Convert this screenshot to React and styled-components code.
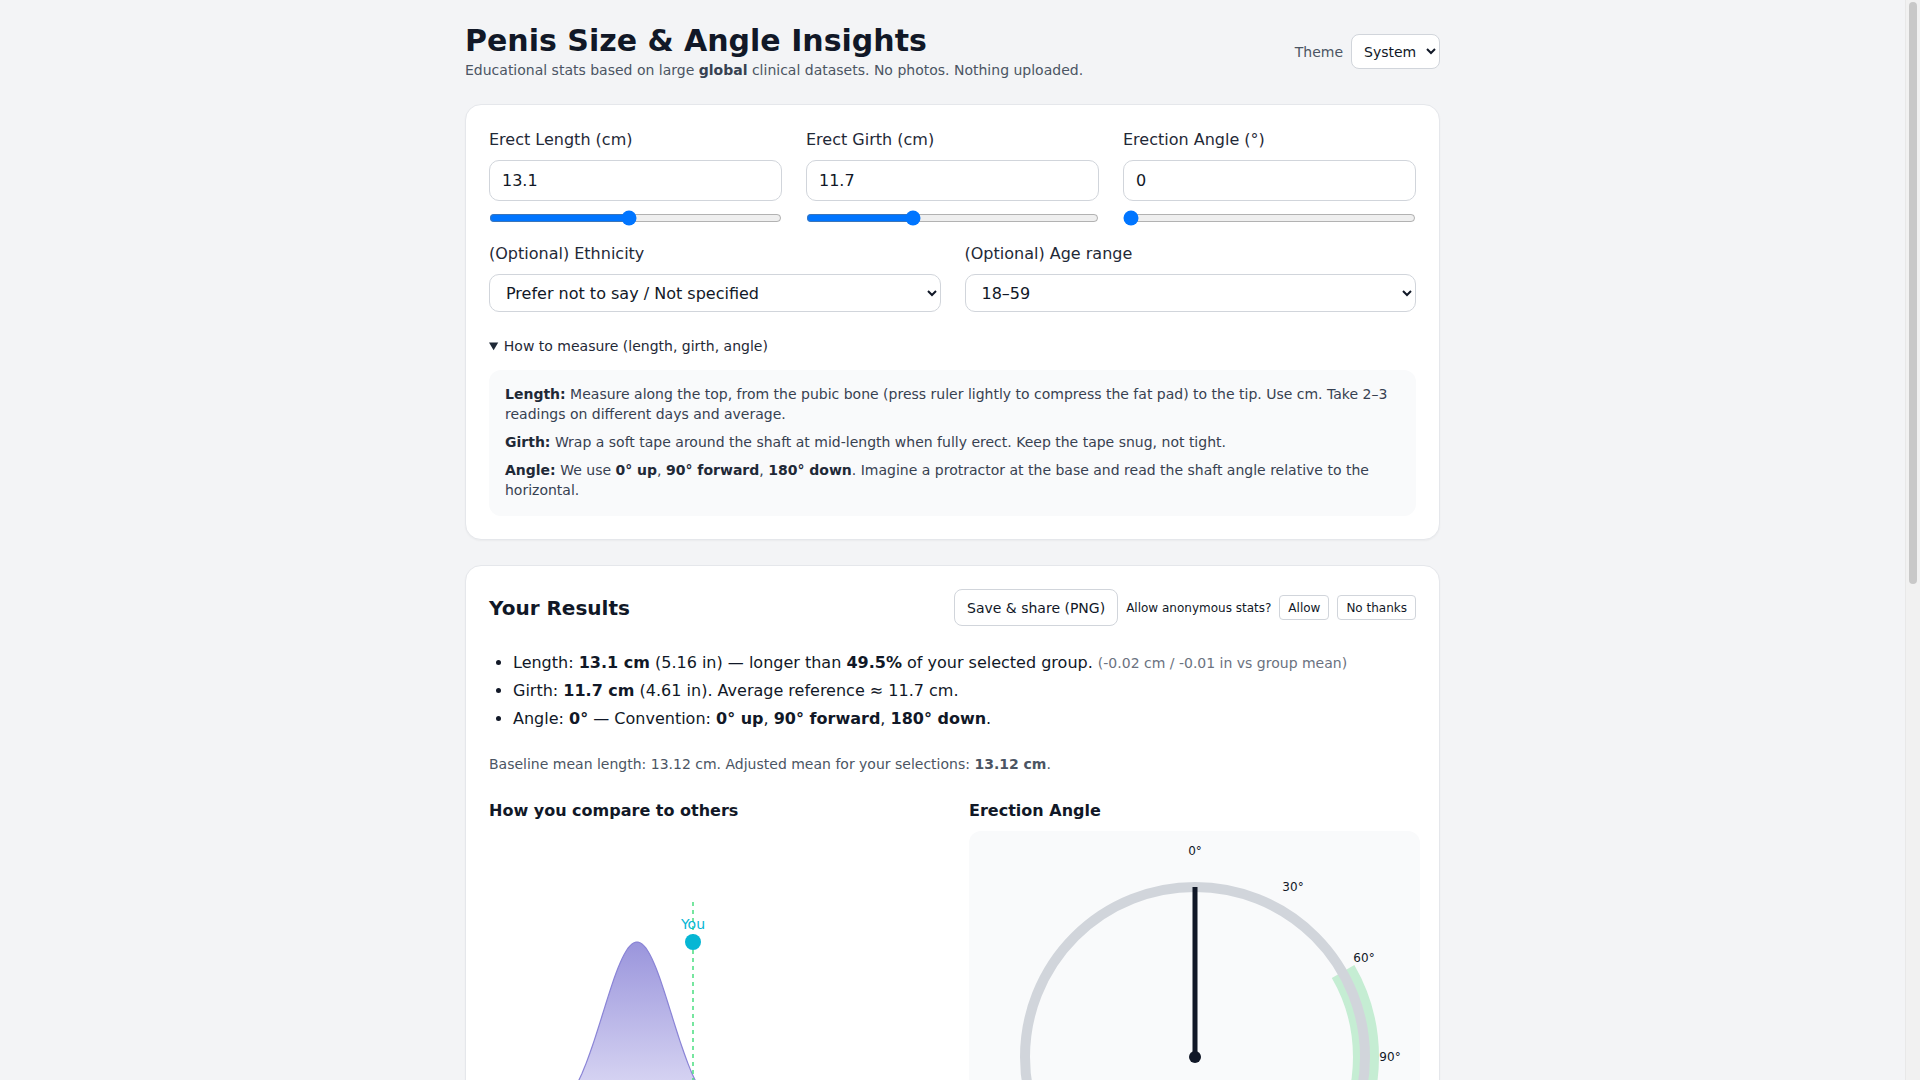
import React from "react";
import styled, { createGlobalStyle } from "styled-components";

const GlobalStyle = createGlobalStyle`
  html, body {
    margin: 0;
    padding: 0;
    background: #f3f4f6;
    font-family: "DejaVu Sans", "Noto Sans", sans-serif;
    color: #111827;
  }
  * { box-sizing: border-box; }
  input, select, button { font-family: inherit; }
`;

/* room for the window's scrollbar, as in the reference */
const Page = styled.div`
  min-height: 1990px;
  padding: 23px 15px 48px 0;
`;

const FakeScrollbar = styled.div`
  position: fixed;
  top: 0;
  right: 0;
  width: 15px;
  height: 100vh;
  background: #f1f1f1;
  border-left: 1px solid #e8e8e8;

  &::after {
    content: "";
    position: absolute;
    top: 2px;
    left: 3px;
    width: 8px;
    height: 582px;
    border-radius: 4px;
    background: #c8c8c8;
  }
`;

const Container = styled.div`
  width: 975px;
  margin: 0 auto;
`;

const Header = styled.header`
  display: flex;
  align-items: center;
  justify-content: space-between;
  margin-bottom: 24px;
`;

const Title = styled.h1`
  margin: 0;
  font-size: 30px;
  line-height: 36px;
  font-weight: 700;
  color: #111827;
`;

const Subtitle = styled.p`
  margin: 1px 0 0;
  font-size: 14px;
  line-height: 20px;
  color: #4b5563;

  b { color: #374151; }
`;

const ThemeBox = styled.label`
  display: flex;
  align-items: center;
  gap: 8px;
  font-size: 14px;
  color: #4b5563;
`;

const SmallSelect = styled.select`
  height: 35px;
  padding: 0 6px 0 8px;
  font-size: 14px;
  color: #111827;
  background: #fff;
  border: 1px solid #d1d5db;
  border-radius: 8px;
`;

const Card = styled.section`
  background: #fff;
  border: 1px solid #e5e7eb;
  border-radius: 16px;
  padding: 23px;
  box-shadow: 0 1px 2px rgba(0, 0, 0, 0.04);
  & + & { margin-top: 25px; }
`;

const FieldGrid = styled.div`
  display: grid;
  grid-template-columns: repeat(${(p) => p.$cols}, 1fr);
  column-gap: 24px;
  margin-top: ${(p) => p.$top || 0}px;
`;

const Field = styled.div`
  display: flex;
  flex-direction: column;
`;

const Label = styled.label`
  font-size: 16px;
  line-height: 24px;
  color: #1f2937;
  margin-bottom: 8px;
`;

const NumberInput = styled.input`
  height: 41px;
  padding: 0 12px;
  font-size: 16px;
  color: #111827;
  border: 1px solid #d1d5db;
  border-radius: 10px;
  background: #fff;
`;

const Range = styled.input`
  display: block;
  width: 100%;
  height: 16px;
  margin: 9px 0 0;
`;

const Select = styled.select`
  height: 38px;
  padding: 0 8px 0 12px;
  font-size: 16px;
  color: #111827;
  background: #fff;
  border: 1px solid #d1d5db;
  border-radius: 10px;
`;

const Details = styled.details`
  margin-top: 24px;

  summary {
    font-size: 14px;
    line-height: 20px;
    color: #1f2937;
    cursor: pointer;
  }
`;

const HelpBox = styled.div`
  margin-top: 14px;
  padding: 14px 16px 16px;
  background: #f9fafb;
  border-radius: 12px;

  p {
    margin: 0;
    font-size: 14px;
    line-height: 20px;
    color: #374151;
  }
  p + p { margin-top: 8px; }
  b { color: #1f2937; }
`;

const ResultsHead = styled.div`
  display: flex;
  align-items: center;
  justify-content: space-between;
`;

const H2 = styled.h2`
  margin: 0;
  font-size: 20px;
  font-weight: 700;
  color: #111827;
`;

const Actions = styled.div`
  display: flex;
  align-items: center;
  gap: 8px;
`;

const Button = styled.button`
  height: ${(p) => (p.$small ? 25 : 37)}px;
  padding: 0 ${(p) => (p.$small ? 8 : 12)}px;
  font-size: ${(p) => (p.$small ? 12 : 14)}px;
  color: #111827;
  background: #fff;
  border: 1px solid #d1d5db;
  border-radius: ${(p) => (p.$small ? 4 : 8)}px;
  cursor: pointer;
`;

const Muted = styled.span`
  font-size: 12px;
  color: #111827;
`;

const List = styled.ul`
  margin: 23px 0 0;
  padding-left: 24px;

  li {
    font-size: 16px;
    line-height: 28px;
    color: #111827;
  }
`;

const Aside = styled.span`
  font-size: 14px;
  color: #6b7280;
`;

const Baseline = styled.p`
  margin: 21px 0 0;
  font-size: 14px;
  line-height: 20px;
  color: #4b5563;
`;

const ChartGrid = styled.div`
  display: grid;
  grid-template-columns: 1fr 1fr;
  column-gap: 32px;
  margin-top: 25px;
`;

const H3 = styled.h3`
  margin: 0 0 8px;
  font-size: 16px;
  line-height: 24px;
  font-weight: 700;
  color: #111827;
`;

const GaugePanel = styled.div`
  background: #f9fafb;
  border-radius: 12px;
  height: 460px;
  margin-right: -3px;
  svg { display: block; }
`;

function bellPath(cx, base, amp, sigma) {
  const pts = [];
  for (let x = cx - 4.5 * sigma; x <= cx + 4.5 * sigma; x += 2) {
    const y = base - amp * Math.exp(-((x - cx) ** 2) / (2 * sigma * sigma));
    pts.push(`${x.toFixed(1)},${y.toFixed(1)}`);
  }
  return pts;
}

const CompareChart = () => {
  const cx = 148;
  const base = 291;
  const pts = bellPath(cx, base, 180, 34);
  const line = "M" + pts.join(" L");
  const area = `${line} L${cx + 4.5 * 34},${base} L${cx - 4.5 * 34},${base} Z`;
  return (
    <svg width="448" height="340" viewBox="0 0 448 340">
      <defs>
        <linearGradient id="bell" x1="0" y1="0" x2="0" y2="1">
          <stop offset="0%" stopColor="#9a95dc" />
          <stop offset="100%" stopColor="#e6e4f8" />
        </linearGradient>
      </defs>
      <path d={area} fill="url(#bell)" />
      <path d={line} fill="none" stroke="#8a84d6" strokeWidth="1.2" />
      <line x1="0" y1={base} x2="448" y2={base} stroke="#e5e7eb" />
      <line x1="204" y1="71" x2="204" y2={base} stroke="#4ade80" strokeWidth="1.5" strokeDasharray="4 4" />
      <circle cx="204" cy="111" r="8" fill="#06b6d4" />
      <text x="204" y="98" textAnchor="middle" fontSize="14" fill="#06b6d4">You</text>
      {[8, 11, 14, 17, 20].map((v, i) => (
        <text key={v} x={46 + i * 90} y={base + 20} textAnchor="middle" fontSize="11" fill="#6b7280">{v} cm</text>
      ))}
    </svg>
  );
};

const AngleGauge = ({ angle }) => {
  const cx = 226;
  const cy = 226;
  const r = 170;
  const pt = (deg, rad) => [cx + rad * Math.sin((deg * Math.PI) / 180), cy - rad * Math.cos((deg * Math.PI) / 180)];
  const [gx1, gy1] = pt(60, 171);
  const [gx2, gy2] = pt(120, 171);
  const [nx, ny] = pt(angle, r);
  const labels = [
    [0, 226, 20], [30, 324, 56], [60, 395, 127], [90, 421, 226],
    [120, 395, 325], [150, 324, 396], [180, 226, 436],
  ];
  return (
    <svg width="451" height="460" viewBox="0 0 451 460">
      <path d={`M${gx1} ${gy1} A171 171 0 0 1 ${gx2} ${gy2}`} fill="none" stroke="#c5edd3" strokeWidth="26" />
      <circle cx={cx} cy={cy} r={r} fill="none" stroke="#d1d5db" strokeWidth="10" />
      {labels.map(([d, x, y]) => (
        <text key={d} x={x} y={y} textAnchor="middle" dominantBaseline="central" fontSize="12" fill="#111827">{d}°</text>
      ))}
      <line x1={cx} y1={cy} x2={nx} y2={ny} stroke="#111827" strokeWidth="5" />
      <circle cx={cx} cy={cy} r="6" fill="#111827" />
    </svg>
  );
};

export default function App() {
  return (
    <>
      <GlobalStyle />
      <FakeScrollbar />
      <Page>
        <Container>
          <Header>
            <div>
              <Title>Penis Size &amp; Angle Insights</Title>
              <Subtitle>
                Educational stats based on large <b>global</b> clinical datasets. No photos. Nothing uploaded.
              </Subtitle>
            </div>
            <ThemeBox>
              Theme
              <SmallSelect defaultValue="system">
                <option value="system">System</option>
                <option value="light">Light</option>
                <option value="dark">Dark</option>
              </SmallSelect>
            </ThemeBox>
          </Header>

          <Card>
            <FieldGrid $cols={3}>
              <Field>
                <Label>Erect Length (cm)</Label>
                <NumberInput type="text" defaultValue="13.1" />
                <Range type="range" min="5" max="22" step="0.1" defaultValue="13.1" />
              </Field>
              <Field>
                <Label>Erect Girth (cm)</Label>
                <NumberInput type="text" defaultValue="11.7" />
                <Range type="range" min="6" max="22" step="0.1" defaultValue="11.7" />
              </Field>
              <Field>
                <Label>Erection Angle (°)</Label>
                <NumberInput type="text" defaultValue="0" />
                <Range type="range" min="0" max="180" step="1" defaultValue="0" />
              </Field>
            </FieldGrid>

            <FieldGrid $cols={2} $top={16}>
              <Field>
                <Label>(Optional) Ethnicity</Label>
                <Select defaultValue="none">
                  <option value="none">Prefer not to say / Not specified</option>
                </Select>
              </Field>
              <Field>
                <Label>(Optional) Age range</Label>
                <Select defaultValue="18-59">
                  <option value="18-59">18–59</option>
                </Select>
              </Field>
            </FieldGrid>

            <Details open>
              <summary>How to measure (length, girth, angle)</summary>
              <HelpBox>
                <p>
                  <b>Length:</b> Measure along the top, from the pubic bone (press ruler lightly to compress the fat pad) to the tip. Use cm. Take 2–3 readings on different days and average.
                </p>
                <p>
                  <b>Girth:</b> Wrap a soft tape around the shaft at mid-length when fully erect. Keep the tape snug, not tight.
                </p>
                <p>
                  <b>Angle:</b> We use <b>0° up</b>, <b>90° forward</b>, <b>180° down</b>. Imagine a protractor at the base and read the shaft angle relative to the horizontal.
                </p>
              </HelpBox>
            </Details>
          </Card>

          <Card>
            <ResultsHead>
              <H2>Your Results</H2>
              <Actions>
                <Button>Save &amp; share (PNG)</Button>
                <Muted>Allow anonymous stats?</Muted>
                <Button $small>Allow</Button>
                <Button $small>No thanks</Button>
              </Actions>
            </ResultsHead>

            <List>
              <li>
                Length: <b>13.1 cm</b> (5.16 in) — longer than <b>49.5%</b> of your selected group.{" "}
                <Aside>(-0.02 cm / -0.01 in vs group mean)</Aside>
              </li>
              <li>
                Girth: <b>11.7 cm</b> (4.61 in). Average reference ≈ 11.7 cm.
              </li>
              <li>
                Angle: <b>0°</b> — Convention: <b>0° up</b>, <b>90° forward</b>, <b>180° down</b>.
              </li>
            </List>

            <Baseline>
              Baseline mean length: 13.12 cm. Adjusted mean for your selections: <b>13.12 cm</b>.
            </Baseline>

            <ChartGrid>
              <div>
                <H3>How you compare to others</H3>
                <CompareChart />
              </div>
              <div>
                <H3>Erection Angle</H3>
                <GaugePanel>
                  <AngleGauge angle={0} />
                </GaugePanel>
              </div>
            </ChartGrid>
          </Card>
        </Container>
      </Page>
    </>
  );
}
